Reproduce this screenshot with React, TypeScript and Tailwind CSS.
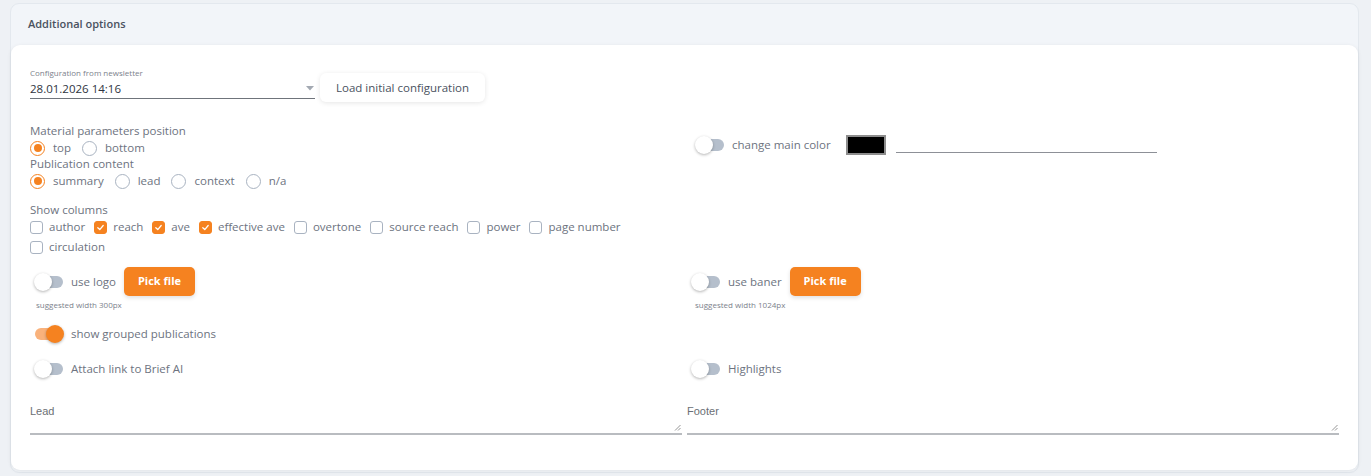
import React from "react";

const font = { fontFamily: '"Open Sans", "Noto Sans", sans-serif' };

function Radio({ checked, label }: { checked?: boolean; label: string }) {
  return (
    <div className="flex items-center gap-[8px]">
      <span
        className={
          "flex h-[15px] w-[15px] items-center justify-center rounded-full border " +
          (checked ? "border-[#f58220]" : "border-[#a9b3c1]")
        }
      >
        {checked && <span className="h-[8px] w-[8px] rounded-full bg-[#f58220]" />}
      </span>
      <span>{label}</span>
    </div>
  );
}

function Check({ checked, label }: { checked?: boolean; label: string }) {
  return (
    <div className="flex items-center gap-[6px]">
      <span
        className={
          "flex h-[13px] w-[13px] items-center justify-center rounded-[3px] border " +
          (checked ? "border-[#f58220] bg-[#f58220]" : "border-[#a9b3c1] bg-white")
        }
      >
        {checked && (
          <svg width="9" height="9" viewBox="0 0 10 10" fill="none">
            <path d="M2 5.2 L4.2 7.3 L8 2.8" stroke="white" strokeWidth="1.4" strokeLinecap="round" strokeLinejoin="round" />
          </svg>
        )}
      </span>
      <span>{label}</span>
    </div>
  );
}

function Toggle({ on, label }: { on?: boolean; label: string }) {
  return (
    <div className="flex items-center gap-[7px]">
      <span className="relative flex h-[18px] w-[30px] items-center">
        <span
          className={
            "h-[12px] w-[28px] rounded-full ml-[1px] " + (on ? "bg-[#f9b27c]" : "bg-[#b5bfcc]")
          }
        />
        <span
          className={
            "absolute top-0 h-[18px] w-[18px] rounded-full shadow-[0_1px_3px_rgba(0,0,0,0.3)] " +
            (on ? "right-0 bg-[#f58220]" : "left-0 bg-white")
          }
        />
      </span>
      <span>{label}</span>
    </div>
  );
}

function PickFile() {
  return (
    <button className="h-[29px] w-[71px] rounded-[5px] bg-[#f58220] text-[11px] font-bold text-white shadow-[0_2px_4px_rgba(0,0,0,0.12)]">
      Pick file
    </button>
  );
}

function TextArea({ label }: { label: string }) {
  return (
    <div className="relative">
      <div
        className="text-[11px] text-[#6b6f75]"
        style={{ fontFamily: '"Liberation Sans", Arial, sans-serif' }}
      >
        {label}
      </div>
      <div className="h-[15px] border-b-[2px] border-[#b9bcc0]" />
      <svg className="absolute bottom-[4px] right-[1px]" width="7" height="7" viewBox="0 0 7 7">
        <path d="M1 6.5 L6.5 1 M4 6.5 L6.5 4" stroke="#8a8a8a" strokeWidth="0.9" />
      </svg>
    </div>
  );
}

export default function App() {
  return (
    <div className="min-h-[476px] w-[1371px] bg-[#eef1f5] pl-[10px] pt-[3px]" style={font}>
      <div className="w-[1349px] rounded-[9px] border border-[#e3e8ee] bg-[#f2f5f9]">
        <div className="flex h-[41px] items-center pl-[17px] text-[11px] font-semibold text-[#4a5260]">
          Additional options
        </div>
        <div className="mb-[2px] rounded-[9px] bg-white px-[19px] pb-[35px] pt-[23px] shadow-[0_1px_4px_rgba(0,0,0,0.08)] text-[11.5px] text-[#6d7380]">
          {/* config */}
          <div className="flex items-start gap-[5px]">
            <div className="w-[285px]">
              <div className="text-[8px] leading-[10px] text-[#7c828c]">Configuration from newsletter</div>
              <div className="flex h-[21px] items-center justify-between border-b border-[#6f747b] pt-[1px] text-[11.5px] text-[#2e3440]">
                <span>28.01.2026 14:16</span>
                <svg width="8" height="5" viewBox="0 0 8 5" className="mr-[1px]">
                  <path d="M0 0 L8 0 L4 4.5 Z" fill="#a3a9b2" />
                </svg>
              </div>
            </div>
            <button className="mt-[5px] h-[29px] rounded-[6px] bg-white px-[16px] text-[11.5px] font-medium text-[#4a5260] shadow-[0_1px_5px_rgba(0,0,0,0.1)]">
              Load initial configuration
            </button>
          </div>

          {/* main grid */}
          <div className="mt-[22px] grid grid-cols-2 gap-x-[5px]">
            <div className="flex flex-col">
              <div className="leading-[14px]">Material parameters position</div>
              <div className="mt-[2px] flex h-[16px] items-center gap-[11px]">
                <Radio checked label="top" />
                <Radio label="bottom" />
              </div>
              <div className="mt-[1px] leading-[14px]">Publication content</div>
              <div className="mt-[2px] flex h-[16px] items-center gap-[11px]">
                <Radio checked label="summary" />
                <Radio label="lead" />
                <Radio label="context" />
                <Radio label="n/a" />
              </div>
              <div className="mt-[14px] leading-[14px]">Show columns</div>
              <div className="mt-[2px] flex flex-wrap gap-x-[9px] gap-y-[4px] pr-[20px]">
                {[
                  ["author", false],
                  ["reach", true],
                  ["ave", true],
                  ["effective ave", true],
                  ["overtone", false],
                  ["source reach", false],
                  ["power", false],
                  ["page number", false],
                  ["circulation", false],
                ].map(([l, c]) => (
                  <div key={l as string} className="h-[16px] flex items-center">
                    <Check label={l as string} checked={c as boolean} />
                  </div>
                ))}
              </div>
            </div>
            <div className="pl-[8px] pt-[11px]">
              <div className="flex items-center">
                <Toggle label="change main color" />
                <span className="ml-[15px] h-[20px] w-[40px] border-[2px] border-[#8d8d8d] bg-black" />
                <span className="ml-[10px] mt-[14px] h-[1px] w-[261px] bg-[#8d9097]" />
              </div>
            </div>

            <div className="mt-[12px] pl-[4px]">
              <div className="flex items-center gap-[8px]">
                <Toggle label="use logo" />
                <PickFile />
              </div>
              <div className="mt-[4px] pl-[2px] text-[8px] leading-[10px] text-[#7c828c]">suggested width 300px</div>
            </div>
            <div className="mt-[12px] pl-[4px]">
              <div className="flex items-center gap-[8px]">
                <Toggle label="use baner" />
                <PickFile />
              </div>
              <div className="mt-[4px] pl-[4px] text-[8px] leading-[10px] text-[#7c828c]">suggested width 1024px</div>
            </div>

            <div className="col-span-2 mt-[15px] pl-[4px]">
              <Toggle on label="show grouped publications" />
            </div>

            <div className="mt-[17px] pl-[4px]">
              <Toggle label="Attach link to Brief AI" />
            </div>
            <div className="mt-[17px] pl-[4px]">
              <Toggle label="Highlights" />
            </div>

            <div className="mt-[25px]">
              <TextArea label="Lead" />
            </div>
            <div className="mt-[25px]">
              <TextArea label="Footer" />
            </div>
          </div>
        </div>
      </div>
    </div>
  );
}
